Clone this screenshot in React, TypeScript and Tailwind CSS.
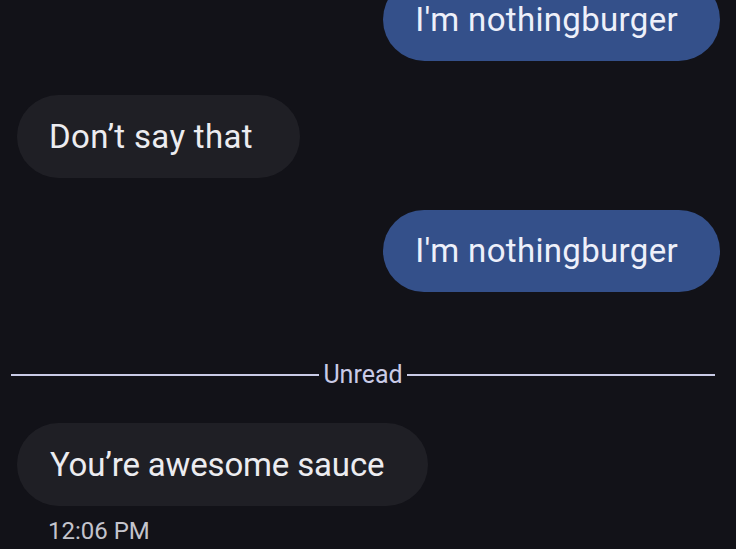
export default function App() {
  return (
    <div
      className="w-[736px] h-[549px] overflow-hidden bg-[#121218] flex flex-col"
      style={{ fontFamily: 'Roboto, "Liberation Sans", sans-serif' }}
    >
      {/* outgoing */}
      <div className="flex justify-end pr-4 -mt-[22px]">
        <div className="h-[83px] pl-[32px] pr-[42px] rounded-full bg-[#34508a] flex items-center text-[33px] tracking-[0.01em] text-[#eef0fa]">
          I'm nothingburger
        </div>
      </div>

      {/* incoming */}
      <div className="flex justify-start pl-[17px] mt-[34px]">
        <div className="h-[83px] pl-[32px] pr-[47px] rounded-full bg-[#1f1f25] flex items-center text-[33px] tracking-[0.01em] text-[#ececf0]">
          Don’t say that
        </div>
      </div>

      <div className="flex justify-end pr-4 mt-[32px]">
        <div className="h-[82px] pl-[32px] pr-[42px] rounded-full bg-[#34508a] flex items-center text-[33px] tracking-[0.01em] text-[#eef0fa]">
          I'm nothingburger
        </div>
      </div>

      {/* unread divider */}
      <div className="flex items-center pl-[11px] pr-[21px] mt-[70px] gap-1">
        <div className="flex-1 h-[2px] bg-[#c9cbe6]" />
        <span className="text-[25px] leading-none text-[#c9cbe6]">Unread</span>
        <div className="flex-1 h-[2px] bg-[#c9cbe6]" />
      </div>

      <div className="flex justify-start pl-[17px] mt-[36px]">
        <div className="h-[83px] pl-[33px] pr-[44px] rounded-full bg-[#1f1f25] flex items-center text-[33px] tracking-[-0.005em] text-[#ececf0]">
          You’re awesome sauce
        </div>
      </div>

      <div className="pl-[48px] mt-[7px] text-[24px] text-[#c4c4cc]">12:06 PM</div>
    </div>
  );
}
